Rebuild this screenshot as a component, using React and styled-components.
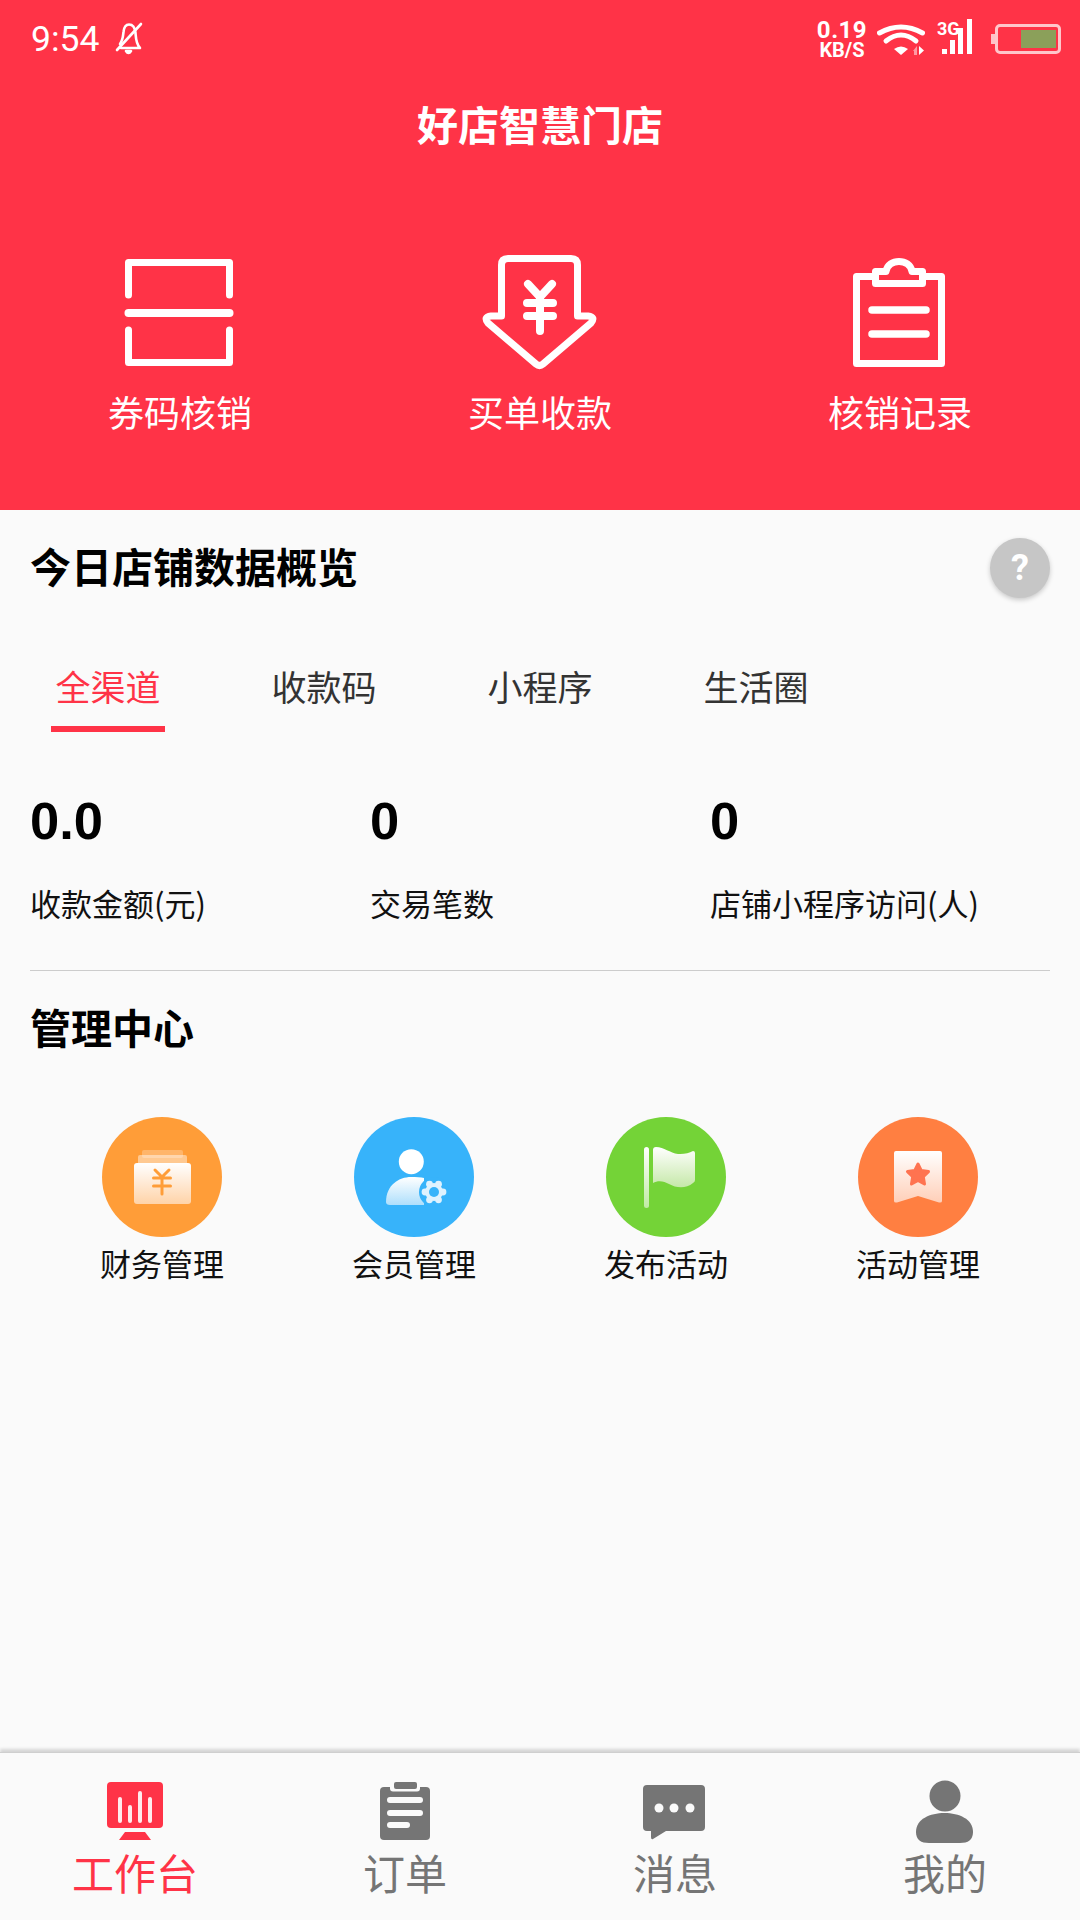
import React from "react";
import styled, { createGlobalStyle } from "styled-components";

const CJK = '"Noto Sans CJK SC", "Noto Sans", sans-serif';
const RED = "#ff3347";
const GRAY = "#757575";
const BG = "#fafafa";

const Global = createGlobalStyle`
  html, body { margin: 0; padding: 0; background: ${BG}; }
  * { box-sizing: border-box; }
  svg { display: block; }
`;

const Page = styled.div`
  width: 1080px;
  height: 1920px;
  display: flex;
  flex-direction: column;
  background: ${BG};
  font-family: ${CJK};
  overflow: hidden;
`;

const Header = styled.header`
  height: 510px;
  flex: none;
  background: ${RED};
  color: #fff;
`;

const StatusBar = styled.div`
  height: 78px;
  display: flex;
  align-items: center;
  justify-content: space-between;
  padding: 0 19px 0 31px;
`;

const StatusLeft = styled.div`
  display: flex;
  align-items: center;
  gap: 16px;
`;

const Clock = styled.span`
  font: 400 35.5px/40px Roboto, sans-serif;
`;

const StatusRight = styled.div`
  display: flex;
  align-items: center;
`;

const Speed = styled.div`
  width: 50px;
  display: flex;
  flex-direction: column;
  align-items: center;
  font-family: Roboto, sans-serif;
  font-weight: 700;
  margin-right: 10px;
`;

const SpeedValue = styled.span`
  font-size: 24px;
  line-height: 22px;
  letter-spacing: 0.5px;
`;

const SpeedUnit = styled.span`
  font-size: 20px;
  line-height: 18px;
`;

const Signal = styled.div`
  position: relative;
  width: 36px;
  height: 40px;
  margin: 0 18px 0 12px;
`;

const SignalTag = styled.span`
  position: absolute;
  left: 0;
  top: 0;
  font: 700 18px/20px Roboto, sans-serif;
`;

const Battery = styled.div`
  display: flex;
  align-items: center;
`;

const BatteryNub = styled.span`
  width: 4px;
  height: 10px;
  background: rgba(255, 255, 255, 0.7);
`;

const BatteryBody = styled.div`
  width: 66px;
  height: 30px;
  border: 3px solid rgba(255, 255, 255, 0.72);
  border-radius: 5px;
  display: flex;
  justify-content: flex-end;
  padding: 3px 2px;
`;

const BatteryLevel = styled.span`
  width: 35px;
  background: #8ba05a;
`;

const Title = styled.h1`
  margin: 0;
  height: 96px;
  line-height: 91px;
  text-align: center;
  font-size: 41px;
  font-weight: 700;
`;

const Actions = styled.div`
  display: grid;
  grid-template-columns: repeat(3, 360px);
  padding-top: 78px;
`;

const Action = styled.div`
  display: flex;
  flex-direction: column;
  align-items: center;
`;

const ActionLabel = styled.span`
  margin-top: 19px;
  font-size: 36px;
  line-height: 40px;
`;

const OverviewHead = styled.div`
  height: 116px;
  display: flex;
  align-items: center;
  justify-content: space-between;
  padding: 0 30px;
`;

const SectionTitle = styled.h2`
  margin: 0;
  padding-bottom: 6px;
  font-size: 41px;
  line-height: 60px;
  font-weight: 700;
  color: #000;
`;

const HelpButton = styled.span`
  width: 60px;
  height: 60px;
  border-radius: 50%;
  background: #c6c6c6;
  box-shadow: 0 2px 5px rgba(0, 0, 0, 0.2);
  color: #fff;
  display: flex;
  align-items: center;
  justify-content: center;
  font: 700 36px/60px Roboto, sans-serif;
`;

const Tabs = styled.div`
  display: grid;
  grid-template-columns: repeat(4, 216px);
  margin-top: 32px;
`;

const Tab = styled.div`
  display: flex;
  justify-content: center;
`;

const TabLabel = styled.span`
  width: 114px;
  height: 74px;
  text-align: center;
  font-size: 35px;
  line-height: 56px;
  color: ${(p) => (p.$active ? RED : "#333")};
  border-bottom: 6px solid ${(p) => (p.$active ? RED : "transparent")};
`;

const Stats = styled.div`
  display: grid;
  grid-template-columns: repeat(3, 340px);
  margin: 60px 0 0 30px;
  padding: 0 0 45px 0;
  width: 1020px;
  border-bottom: 1px solid #ccc;
`;

const Stat = styled.div`
  display: flex;
  flex-direction: column;
`;

const StatValue = styled.span`
  font: 700 52.5px/58px "Liberation Sans", Arial, sans-serif;
  color: #000;
`;

const StatLabel = styled.span`
  margin-top: 31px;
  font-size: 31px;
  line-height: 44px;
  color: #111;
`;

const ManageTitle = styled(SectionTitle)`
  margin: 25px 0 0 30px;
`;

const Tools = styled.div`
  display: grid;
  grid-template-columns: repeat(4, 252px);
  padding: 0 36px;
  margin-top: 55px;
`;

const Tool = styled.div`
  display: flex;
  flex-direction: column;
  align-items: center;
`;

const ToolCircle = styled.div`
  width: 120px;
  height: 120px;
  border-radius: 50%;
  background: ${(p) => p.$color};
`;

const ToolLabel = styled.span`
  margin-top: 4px;
  font-size: 31px;
  line-height: 44px;
  color: #111;
`;

const Nav = styled.nav`
  margin-top: auto;
  height: 168px;
  flex: none;
  display: grid;
  grid-template-columns: repeat(4, 270px);
  padding-top: 27px;
  background: ${BG};
  border-top: 1px solid #cfcfcf;
  box-shadow: 0 -3px 3px rgba(0, 0, 0, 0.15);
`;

const NavItem = styled.div`
  display: flex;
  flex-direction: column;
  align-items: center;
  color: ${(p) => (p.$active ? RED : GRAY)};
`;

const NavLabel = styled.span`
  margin-top: 3px;
  font-size: 42px;
  line-height: 50px;
`;

const BellOff = () => (
  <svg width="28" height="34" viewBox="0 0 28 34" fill="none" stroke="#fff" strokeWidth="2.6" strokeLinecap="round" strokeLinejoin="round">
    <path d="M5 22C8 18 8 14 8.5 10C9 5 11 2.5 14 2.5C18 2.5 20 6 20.5 11C21 17 21 22 25 26H6" />
    <path d="M2 28L26 2" />
    <path d="M11 29Q13.5 33 16 29Z" fill="#fff" />
  </svg>
);

const Wifi = () => (
  <svg width="48" height="35" viewBox="0 0 48 35" fill="none">
    <path d="M2.5 11Q24 -1 45.5 11" stroke="#fff" strokeWidth="5" strokeLinecap="round" />
    <path d="M9 19Q24 7 39 19" stroke="#fff" strokeWidth="5" strokeLinecap="round" />
    <path d="M17 27Q24 22 31 27L24 33Z" fill="#fff" />
    <path d="M36 29L40 24V33H37V29Z" fill="#fff" opacity="0.5" />
    <path d="M42 24V33L47 28.5Z" fill="#fff" />
  </svg>
);

const SignalBars = () => (
  <svg width="36" height="40" viewBox="0 0 36 40" fill="#fff">
    <rect x="5" y="30" width="5" height="5" />
    <rect x="13" y="21" width="5" height="14" />
    <rect x="21" y="9" width="5" height="26" />
    <rect x="30" y="-1" width="5" height="36" />
  </svg>
);

const ScanIcon = () => (
  <svg width="120" height="120" viewBox="0 0 120 120" fill="none" stroke="#fff" strokeWidth="7" strokeLinecap="round" strokeLinejoin="round">
    <path d="M8.5 43V10.5H109.5V43" />
    <path d="M8.5 61H109.5" strokeWidth="8" />
    <path d="M8.5 78V110.5H109.5V78" />
  </svg>
);

const PayIcon = () => (
  <svg width="120" height="120" viewBox="0 0 120 120" fill="none" stroke="#fff" strokeWidth="7" strokeLinecap="round" strokeLinejoin="round">
    <path d="M21.5 64V13Q21.5 6.5 28 6.5H91Q97.5 6.5 97.5 13V64H108Q116 65 111 71L63 112Q59.5 115 56 112L8 71Q3 65 11 64Z" />
    <path d="M48 32L60 45L72 32M47 51H73M47 64H73M60 45V79" strokeWidth="8" />
  </svg>
);

const RecordIcon = () => (
  <svg width="120" height="120" viewBox="0 0 120 120" fill="none" stroke="#fff" strokeWidth="7" strokeLinecap="round" strokeLinejoin="round">
    <path d="M34 24.5H16.5V111.5H101.5V24.5H84" />
    <path d="M46 19.5H35.5V31.5H82.5V19.5H72C70 6 48 6 46 19.5Z" />
    <path d="M32 58H86M32 82H86" strokeWidth="7.5" />
  </svg>
);

const Gradient = ({ id, to }) => (
  <linearGradient id={id} x1="0" y1="0" x2="0" y2="1">
    <stop offset="0" stopColor="#fff" />
    <stop offset="1" stopColor={to} />
  </linearGradient>
);

const WalletIcon = () => (
  <svg width="120" height="120" viewBox="0 0 120 120" fill="none">
    <defs><Gradient id="wallet" to="#ffd3a8" /></defs>
    <rect x="40" y="33" width="41" height="8" rx="2" fill="#fff" opacity="0.25" />
    <rect x="36" y="38" width="49" height="10" rx="2" fill="#fff" opacity="0.45" />
    <rect x="32" y="46" width="57" height="41" rx="3" fill="url(#wallet)" />
    <path d="M53 53L60 60L67 53M51.5 61H68.5M51.5 69H68.5M60 60V77" stroke="#ff9d38" strokeWidth="3" strokeLinecap="round" strokeLinejoin="round" />
  </svg>
);

const MemberIcon = () => (
  <svg width="120" height="120" viewBox="0 0 120 120" fill="none">
    <defs><Gradient id="member" to="#aedffc" /></defs>
    <circle cx="57.3" cy="44.7" r="12.5" fill="#fff" />
    <path d="M32 85C32 68 45 60 57 60C62 60 67 60 70 61V88H36Q32 88 32 85Z" fill="url(#member)" />
    <circle cx="80" cy="75" r="15" fill="#37b3fa" />
    <g fill="#dff2fe">
      <circle cx="80" cy="75" r="9" />
      {[0, 60, 120, 180, 240, 300].map((a) => (
        <circle key={a} cx={80 + 9 * Math.cos((a * Math.PI) / 180)} cy={75 + 9 * Math.sin((a * Math.PI) / 180)} r="3.4" />
      ))}
    </g>
    <circle cx="80" cy="75" r="5" fill="#37b3fa" />
  </svg>
);

const FlagIcon = () => (
  <svg width="120" height="120" viewBox="0 0 120 120" fill="none">
    <defs>
      <Gradient id="flag" to="#c5e8a8" />
      <linearGradient id="pole" x1="0" y1="0" x2="0" y2="1">
        <stop offset="0" stopColor="#fff" />
        <stop offset="1" stopColor="#fff" stopOpacity="0.55" />
      </linearGradient>
    </defs>
    <rect x="38" y="30" width="5" height="61" rx="2.5" fill="url(#pole)" />
    <path d="M47 33Q47 30 50 30C58 30 64 36 72 37C78 37.5 83 36 87 34Q89 34 89 36V63Q89 65 87 66C80 72 70 71 63 67C58 64 52 63 47 66Z" fill="url(#flag)" />
  </svg>
);

const RibbonIcon = () => (
  <svg width="120" height="120" viewBox="0 0 120 120" fill="none">
    <defs><Gradient id="ribbon" to="#ffcfb8" /></defs>
    <path d="M38 34H82Q84 34 84 36V84Q84 86 81 85.5L60 79L39 85.5Q36 86 36 84V36Q36 34 38 34Z" fill="url(#ribbon)" />
    <path d="M60 47L63.3 53.6L70.5 54.6L65.3 59.7L66.5 67L60 63.5L53.5 67L54.7 59.7L49.5 54.6L56.7 53.6Z" fill="#ff7350" stroke="#ff7350" strokeWidth="3" strokeLinejoin="round" />
  </svg>
);

const DeskIcon = () => (
  <svg width="70" height="64" viewBox="0 0 70 64">
    <rect x="7" y="2" width="56" height="46" rx="4" fill="currentColor" />
    <path d="M20 19V41M30 27V41M40 13V41M50 19V41" stroke="#fff" strokeWidth="4" strokeLinecap="round" fill="none" opacity="0.9" />
    <path d="M19 60L25 52H45L51 60Z" fill="currentColor" />
  </svg>
);

const OrderIcon = () => (
  <svg width="70" height="64" viewBox="0 0 70 64">
    <rect x="10" y="7" width="50" height="53" rx="4" fill="currentColor" />
    <rect x="20" y="0" width="30" height="11.5" rx="3" fill={BG} />
    <rect x="24" y="2" width="23" height="7" rx="2" fill="currentColor" />
    <path d="M20 20H50M20 33H50M20 45H37" stroke={BG} strokeWidth="6" strokeLinecap="round" fill="none" />
  </svg>
);

const MessageIcon = () => (
  <svg width="70" height="64" viewBox="0 0 70 64">
    <path d="M7 5H61Q65 5 65 9V47Q65 51 61 51H26L13 59Q11 60 11 57V51H7Q3 51 3 47V9Q3 5 7 5Z" fill="currentColor" />
    <circle cx="19" cy="28" r="4.5" fill={BG} />
    <circle cx="34" cy="28" r="4.5" fill={BG} />
    <circle cx="50" cy="28" r="4.5" fill={BG} />
  </svg>
);

const PersonIcon = () => (
  <svg width="70" height="64" viewBox="0 0 70 64" fill="currentColor">
    <circle cx="35" cy="16" r="15.5" />
    <path d="M6 52C6 39 20 33 34.5 33C49 33 63 39 63 52C63 60 58 63 50 63H19C11 63 6 60 6 52Z" />
  </svg>
);

const actions = [
  { label: "券码核销", Icon: ScanIcon },
  { label: "买单收款", Icon: PayIcon },
  { label: "核销记录", Icon: RecordIcon },
];
const tabs = ["全渠道", "收款码", "小程序", "生活圈"];
const stats = [
  { value: "0.0", label: "收款金额(元)" },
  { value: "0", label: "交易笔数" },
  { value: "0", label: "店铺小程序访问(人)" },
];
const tools = [
  { label: "财务管理", color: "#ff9d38", Icon: WalletIcon },
  { label: "会员管理", color: "#37b3fa", Icon: MemberIcon },
  { label: "发布活动", color: "#74d337", Icon: FlagIcon },
  { label: "活动管理", color: "#ff7f41", Icon: RibbonIcon },
];
const navItems = [
  { label: "工作台", Icon: DeskIcon, active: true },
  { label: "订单", Icon: OrderIcon },
  { label: "消息", Icon: MessageIcon },
  { label: "我的", Icon: PersonIcon },
];

export default function App() {
  return (
    <Page>
      <Global />
      <Header>
        <StatusBar>
          <StatusLeft>
            <Clock>9:54</Clock>
            <BellOff />
          </StatusLeft>
          <StatusRight>
            <Speed>
              <SpeedValue>0.19</SpeedValue>
              <SpeedUnit>KB/S</SpeedUnit>
            </Speed>
            <Wifi />
            <Signal>
              <SignalBars />
              <SignalTag>3G</SignalTag>
            </Signal>
            <Battery>
              <BatteryNub />
              <BatteryBody>
                <BatteryLevel />
              </BatteryBody>
            </Battery>
          </StatusRight>
        </StatusBar>
        <Title>好店智慧门店</Title>
        <Actions>
          {actions.map(({ label, Icon }) => (
            <Action key={label}>
              <Icon />
              <ActionLabel>{label}</ActionLabel>
            </Action>
          ))}
        </Actions>
      </Header>

      <OverviewHead>
        <SectionTitle>今日店铺数据概览</SectionTitle>
        <HelpButton>?</HelpButton>
      </OverviewHead>

      <Tabs>
        {tabs.map((t, i) => (
          <Tab key={t}>
            <TabLabel $active={i === 0}>{t}</TabLabel>
          </Tab>
        ))}
      </Tabs>

      <Stats>
        {stats.map((s) => (
          <Stat key={s.label}>
            <StatValue>{s.value}</StatValue>
            <StatLabel>{s.label}</StatLabel>
          </Stat>
        ))}
      </Stats>

      <ManageTitle>管理中心</ManageTitle>
      <Tools>
        {tools.map(({ label, color, Icon }) => (
          <Tool key={label}>
            <ToolCircle $color={color}>
              <Icon />
            </ToolCircle>
            <ToolLabel>{label}</ToolLabel>
          </Tool>
        ))}
      </Tools>

      <Nav>
        {navItems.map(({ label, Icon, active }) => (
          <NavItem key={label} $active={active}>
            <Icon />
            <NavLabel>{label}</NavLabel>
          </NavItem>
        ))}
      </Nav>
    </Page>
  );
}
